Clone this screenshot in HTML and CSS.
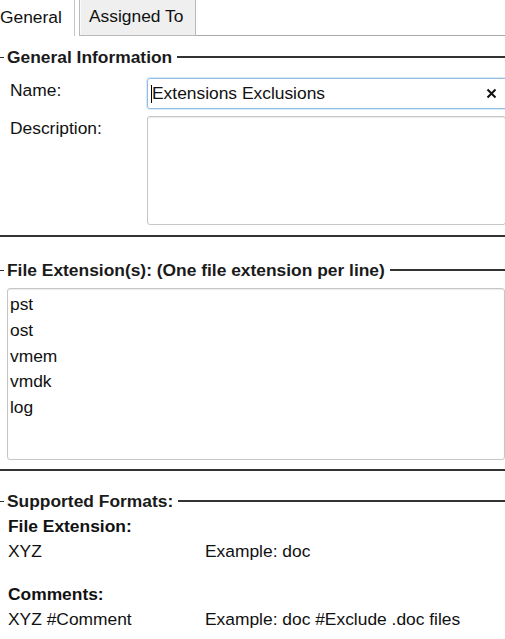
FILE: index.html
```html
<!DOCTYPE html>
<html>
<head>
<meta charset="utf-8">
<link rel="stylesheet" href="styles.css">
</head>
<body>
<div class="page">
  <div class="tabs">
    <div class="tab tab-active">General</div>
    <div class="tab tab-idle">Assigned To</div>
    <div class="tab-fill"></div>
  </div>

  <section class="group group-general">
    <div class="legend"><span class="tick"></span><span class="legend-text">General Information</span><span class="legend-line"></span></div>
    <div class="form-row row-name">
      <div class="label">Name:</div>
      <div class="input-box">
        <span class="caret"></span><span class="input-text">Extensions Exclusions</span>
        <svg class="clear" width="11" height="11" viewBox="0 0 11 11"><path d="M1.5 1.5 L9.5 9.5 M9.5 1.5 L1.5 9.5" stroke="#111" stroke-width="2" fill="none"/></svg>
      </div>
    </div>
    <div class="form-row row-desc">
      <div class="label">Description:</div>
      <div class="area area-desc"></div>
    </div>
  </section>
  <div class="rule rule-1"></div>

  <section class="group group-ext">
    <div class="legend"><span class="tick"></span><span class="legend-text">File Extension(s): (One file extension per line)</span><span class="legend-line"></span></div>
    <div class="area area-ext">
      <div class="ext-line">pst</div>
      <div class="ext-line">ost</div>
      <div class="ext-line">vmem</div>
      <div class="ext-line">vmdk</div>
      <div class="ext-line">log</div>
    </div>
  </section>
  <div class="rule rule-2"></div>

  <section class="group group-formats">
    <div class="legend"><span class="tick"></span><span class="legend-text">Supported Formats:</span><span class="legend-line"></span></div>
    <div class="fmt-grid">
      <div class="fmt-head">File Extension:</div>
      <div class="fmt-cell">XYZ</div><div class="fmt-cell">Example: doc</div>
      <div class="fmt-head fmt-head-2">Comments:</div>
      <div class="fmt-cell">XYZ #Comment</div><div class="fmt-cell">Example: doc #Exclude .doc files</div>
    </div>
  </section>
</div>
</body>
</html>
```

FILE: styles.css
```css
html, body {
  margin: 0;
  padding: 0;
  background: #ffffff;
  overflow: hidden;
}
body {
  width: 505px;
  height: 639px;
  font-family: "Liberation Sans", Arial, sans-serif;
  font-size: 17.4px;
  color: #111;
}
.page {
  display: flex;
  flex-direction: column;
}

/* tabs */
.tabs {
  display: flex;
  height: 36px;
  align-items: stretch;
}
.tab {
  display: flex;
  align-items: center;
  box-sizing: border-box;
  padding-bottom: 2px;
}
.tab-active {
  width: 75px;
  padding-left: 0;
  border-right: 1px solid #c4c4c4;
  background: #fff;
}
.tab-idle {
  margin-left: 4px;
  width: 117px;
  padding-left: 9px;
  background: #efefef;
  border: 1px solid #b9b9b9;
  border-top: none;
  box-shadow: inset 1px 0 0 #fafafa;
}
.tab-fill {
  flex: 1;
  border-bottom: 1px solid #a9a9a9;
}

/* legends */
.legend {
  display: flex;
  align-items: center;
  height: 20px;
  font-weight: bold;
  color: #1a1a1a;
}
.tick {
  width: 4px;
  height: 1px;
  background: #333;
}
.legend-text {
  padding: 0 5px 0 3px;
  white-space: nowrap;
}
.legend-line {
  flex: 1;
  height: 2px;
  background: #333;
}

.group-general { margin-top: 11px; }
.group-ext { margin-top: 23px; }
.group-formats { margin-top: 20px; }

/* rows */
.form-row {
  display: flex;
  align-items: flex-start;
}
.label {
  width: 137px;
  padding-left: 10px;
  padding-top: 2px;
  line-height: 20px;
}
.row-name { margin-top: 11px; }
.row-desc { margin-top: 7px; }

.input-box {
  position: relative;
  flex: 1;
  height: 31px;
  box-sizing: border-box;
  margin-right: -4px;
  border: 1px solid #93bde3;
  border-radius: 3px;
  box-shadow: 0 0 0 1px #dbeaf7;
  display: flex;
  align-items: center;
  padding-left: 3px;
}
.caret {
  width: 1px;
  height: 18px;
  background: #000;
}
.clear {
  position: absolute;
  left: 338px;
  top: 9px;
}

.area {
  box-sizing: border-box;
  border: 1px solid #c6c6c6;
  border-radius: 3px;
  box-shadow: inset 0 1px 1px rgba(0,0,0,0.08);
  background: #fff;
}
.area-desc {
  flex: 1;
  height: 109px;
  margin-right: -1px;
}
.area-ext {
  margin-top: 8px;
  margin-left: 7px;
  height: 172px;
  padding: 3px 0 0 2px;
}
.ext-line {
  line-height: 25.8px;
}

.rule {
  height: 2px;
  background: #333;
}
.rule-1 { margin-top: 10px; }
.rule-2 { margin-top: 9px; }

/* formats */
.fmt-grid {
  display: grid;
  grid-template-columns: 197px 1fr;
  padding-left: 8px;
  margin-top: 3px;
  line-height: 25px;
}
.fmt-head {
  grid-column: 1 / span 2;
  font-weight: bold;
}
.fmt-head-2 {
  margin-top: 18px;
}
```
